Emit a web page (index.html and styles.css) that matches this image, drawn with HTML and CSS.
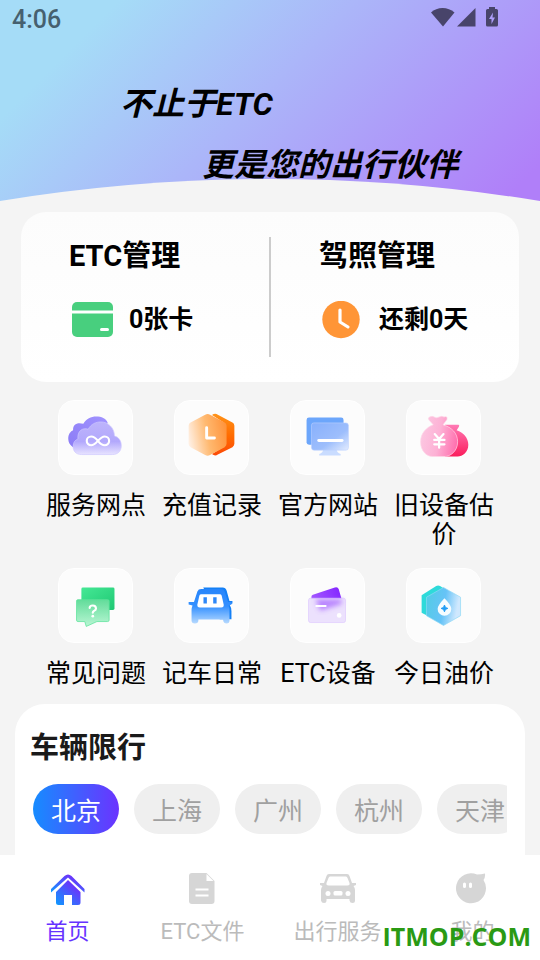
FILE: index.html
```html
<!DOCTYPE html>
<html lang="zh-CN">
<head>
  <meta charset="UTF-8">
  <meta name="viewport" content="width=device-width, initial-scale=1">
  <title>不止于ETC</title>
  <link rel="stylesheet" href="styles.css">
</head>
<body>
  <main>
    <header class="hero">
      <div class="status">
        <span class="time">4:06</span>
        <svg class="status-icons" width="68" height="22" viewBox="0 0 68 22" fill="currentColor">
          <path d="M1 6.500C7 .5 18 .5 24.500 6.500L13 20.500z"/>
          <path d="M45.500 2v18.500H27z"/>
          <path d="M59 1h6v2h1.500q1.500 0 1.500 1.500v14.500q0 1.500-1.500 1.500h-9q-1.500 0-1.500-1.500V4.500Q56 3 57.500 3H59zM63 6.500l-4 6.500h2.500v5l3.500-6.500h-2.500z" fill-rule="evenodd"/>
        </svg>
      </div>
      <h1 class="slogan">
        <span>不止于ETC</span>
        <span class="slogan-second">更是您的出行伙伴</span>
      </h1>
      <svg class="arc" viewBox="0 0 540 23" preserveAspectRatio="none">
        <path d="M0 22Q270-22 540 22V23H0z" fill="#f4f4f4"/>
      </svg>
    </header>

    <section class="manage">
      <div class="manage-item">
        <h2>ETC管理</h2>
        <div class="manage-row">
          <svg width="42" height="38" viewBox="0 0 42 38">
            <rect y="1" width="41" height="35" rx="5" fill="#48cf7e"/>
            <path d="M0 11h41" stroke="#fff" stroke-width="3"/>
            <path d="M29.500 28.500h6" stroke="#fff" stroke-width="3" stroke-linecap="round"/>
          </svg>
          <span>0张卡</span>
        </div>
      </div>
      <div class="manage-item">
        <h2>驾照管理</h2>
        <div class="manage-row">
          <svg width="42" height="38" viewBox="0 0 42 38">
            <circle cx="19" cy="18.500" r="18.700" fill="#ff9536"/>
            <path d="M18 9v12l8 5" fill="none" stroke="#fff" stroke-width="3.200" stroke-linecap="round" stroke-linejoin="round"/>
          </svg>
          <span>还剩0天</span>
        </div>
      </div>
    </section>

    <nav class="services">
      <a href="#">
        <svg class="tile" viewBox="0 0 75 75">
          <defs>
            <linearGradient id="cloudBack" x1="0" y1="1" x2="1" y2="0"><stop stop-color="#8b7cf5"/><stop offset="1" stop-color="#a193ff"/></linearGradient>
            <linearGradient id="cloudFront" x1="0" y1="0" x2="0" y2="1"><stop stop-color="#bdb4fb"/><stop offset=".6" stop-color="#b2a8fc"/><stop offset="1" stop-color="#e7e3ff"/></linearGradient>
            <filter id="soft" x="-30%" y="-30%" width="160%" height="160%"><feGaussianBlur stdDeviation="3"/></filter>
          </defs>
          <path d="M18 49C12 47 9.500 43 9.500 38.500C9.500 34 12 31 14.500 30C14 24 19 21.500 25 23.500C28 18 33 16 38 16C44 16 48 18 50 22L40 49z" fill="url(#cloudBack)"/>
          <path d="M23 55C17 55 14.500 51 14.500 47C14.500 42 17 40 19.500 39C18.500 31 24 27 30 29C33 23.500 38 21.500 43 21.500C51 21.500 57 28 57 36C61.500 37 64 41 64 46C64 52 60 55 55 55z" fill="url(#cloudFront)" stroke="#cfc8ff" stroke-width=".7"/>
          <path d="M40 41C37 37 35 36.500 33 36.500A4.500 4.500 0 0 0 33 45.500C39 45.500 41 36.500 47 36.500A4.500 4.500 0 0 1 47 45.500C45 45.500 43 45 40 41" fill="none" stroke="#fff" stroke-width="2.200"/>
        </svg>
        <span>服务网点</span>
      </a>
      <a href="#">
        <svg class="tile" viewBox="0 0 75 75">
          <defs>
            <linearGradient id="hexBack" x1="0" y1="0" x2="0" y2="1"><stop stop-color="#ff9318"/><stop offset=".55" stop-color="#ff6a00"/><stop offset="1" stop-color="#fc4a08"/></linearGradient>
            <linearGradient id="hexFront" x1="0" y1=".6" x2="1" y2=".4"><stop stop-color="#ffefe2"/><stop offset=".5" stop-color="#ffb970"/><stop offset="1" stop-color="#ff943c"/></linearGradient>
          </defs>
          <path d="M38 14.500Q41 12 44 14L59 22Q61 23 61 25.500V44Q61 46 59 47.500L44 55Q41 57 38 54.500L50 47V22z" fill="url(#hexBack)"/>
          <path d="M31 14Q33.500 12.500 36 14L51 22Q53 23 53 25.500V44Q53 46 51 47.500L36 55.500Q33.500 57 31 55.500L16 47.500Q14 46 14 44V25.500Q14 23 16 22z" fill="url(#hexFront)"/>
          <path d="M32.500 27.500v10.500h8" fill="none" stroke="#fff" stroke-width="3" stroke-linecap="round" stroke-linejoin="round"/>
        </svg>
        <span>充值记录</span>
      </a>
      <a href="#">
        <svg class="tile" viewBox="0 0 75 75">
          <defs>
            <linearGradient id="screenFront" x1="0" y1="0" x2="1" y2="1"><stop stop-color="#88b0fc"/><stop offset=".6" stop-color="#9dbefc"/><stop offset="1" stop-color="#e3ecff"/></linearGradient>
          </defs>
          <rect x="16" y="17" width="38" height="28" rx="2.500" fill="#6ca6fb"/>
          <path d="M33 50h14q0 3 4 4.500v1.500H29v-1.500q4-1.500 4-4.500z" fill="#c9dcff"/>
          <rect x="21" y="22.500" width="38" height="28" rx="2.500" fill="url(#screenFront)" stroke="#bdd3ff" stroke-width=".6"/>
          <path d="M28.500 40.500h24" stroke="#fff" stroke-width="3" stroke-linecap="round"/>
        </svg>
        <span>官方网站</span>
      </a>
      <a href="#">
        <svg class="tile" viewBox="0 0 75 75">
          <defs>
            <linearGradient id="bagBack" x1="0" y1="0" x2="0" y2="1"><stop stop-color="#ff7ab5"/><stop offset="1" stop-color="#fb1d5c"/></linearGradient>
            <linearGradient id="bagFront" x1="0" y1=".4" x2="1" y2=".6"><stop stop-color="#fcc8e2"/><stop offset=".5" stop-color="#fdb1d5"/><stop offset="1" stop-color="#ff6fae"/></linearGradient>
          </defs>
          <path d="M39 24.500h14q1.500 1 0 2.500l-2 3C58 32 63 38 63 45C63 53 57 57 52 57H39z" fill="url(#bagBack)"/>
          <path d="M23 16.500Q26 15 28 16.500T33 16.500T38 16.500Q42 15 41 19L37 24.500C46 27 52 33 52 42C52 52 44 57 39 57H26C20 57 14 51 14 42C14 33 20 27 27 24.500L23 20Q21 18 23 16.500z" fill="url(#bagFront)" stroke="#ffd5e8" stroke-width=".7"/>
          <path d="M28.500 34l4.500 5l4.500-5M33 39v9M28 40h10.500M28 44.500h10.500" fill="none" stroke="#fff" stroke-width="2.300" stroke-linecap="round"/>
        </svg>
        <span>旧设备估价</span>
      </a>
      <a href="#">
        <svg class="tile" viewBox="0 0 75 75">
          <defs>
            <linearGradient id="chatBack" x1="0" y1="0" x2="1" y2="1"><stop stop-color="#45e895"/><stop offset="1" stop-color="#1fc873"/></linearGradient>
            <linearGradient id="chatFront" x1="0" y1="0" x2="0" y2="1"><stop stop-color="#62dc9a"/><stop offset="1" stop-color="#b9f6d4"/></linearGradient>
          </defs>
          <rect x="23" y="19" width="34" height="23" rx="1.500" fill="url(#chatBack)"/>
          <path d="M19.500 31.500H50q1.500 0 1.500 1.500V52.500q0 1.500-1.500 1.500H39L28 59L26.500 54H19.500q-1.500 0-1.500-1.500V33q0-1.500 1.500-1.500z" fill="url(#chatFront)" stroke="#5fe39c" stroke-width=".8"/>
          <path d="M31.500 40Q31.500 37.500 34.700 37.500T38 40.500Q38 42 36 43Q34.700 44 34.700 45" fill="none" stroke="#fff" stroke-width="2.200" stroke-linecap="round"/>
          <circle cx="34.700" cy="48.500" r="1.400" fill="#fff"/>
        </svg>
        <span>常见问题</span>
      </a>
      <a href="#">
        <svg class="tile" viewBox="0 0 75 75">
          <defs>
            <linearGradient id="carFront" x1="0" y1="0" x2="0" y2="1"><stop stop-color="#2785fb"/><stop offset=".5" stop-color="#3490ff"/><stop offset="1" stop-color="#b7daff"/></linearGradient>
          </defs>
          <path d="M29 19h20q3 0 4 3l3 11h3v2.500l-3 1q2 3 2 7v8h-12z" fill="#1480f6"/>
          <path d="M27 20.500h20q3 0 4 2.500l3.500 11H58v2.500l-3 1q1 2 1 4.500v11q0 3-3 3t-3.500-3V52H24v1q0 3-3.500 3T17 53V42q0-2 1-4.500L14 36.500V34h5.500L23 23q1-2.500 4-2.500z" fill="url(#carFront)"/>
          <path d="M27 26h19q1.500 0 2 1.500l2 9q.5 3-2.500 3h-22q-3 0-2.500-3l2-9q.5-1.500 2-1.500z" fill="#fff"/>
          <path d="M31 29v6.500M41 29v6.500" stroke="#2d87f8" stroke-width="3.500"/>
        </svg>
        <span>记车日常</span>
      </a>
      <a href="#">
        <svg class="tile" viewBox="0 0 75 75">
          <defs>
            <linearGradient id="cardBack" x1="0" y1=".6" x2="1" y2=".3"><stop stop-color="#a45bff"/><stop offset="1" stop-color="#8527ff"/></linearGradient>
          </defs>
          <path d="M21 31v-2.500Q21 27 22.500 26.500L45 19Q48 18 49 20.500L52 31v12z" fill="url(#cardBack)"/>
          <rect x="18" y="30" width="38" height="25" rx="2" fill="#e9dcfd"/>
          <path d="M25 31h27v5L30 43z" fill="#9a4eff" opacity=".75" filter="url(#soft)"/>
          <rect x="18" y="30" width="38" height="25" rx="2" fill="#fff" fill-opacity=".15" stroke="#dbc4ff" stroke-width=".6"/>
          <path d="M26 38h9.500" stroke="#fff" stroke-width="2.200" stroke-linecap="round"/>
          <circle cx="49.500" cy="47.700" r="2.400" fill="#fff"/>
        </svg>
        <span>ETC设备</span>
      </a>
      <a href="#">
        <svg class="tile" viewBox="0 0 75 75">
          <defs>
            <linearGradient id="oilFront" x1="0" y1=".4" x2="1" y2=".6"><stop stop-color="#54cbe7"/><stop offset=".5" stop-color="#66c3f7"/><stop offset=".9" stop-color="#cfe8fe"/></linearGradient>
          </defs>
          <path d="M30 17.500Q32 16.500 34 17.500L38 20L20 47.500L15 45V27z" fill="#2edada"/>
          <path d="M37.500 19L55 29V48L37.500 58L20 48V29z" fill="url(#oilFront)" stroke="#8fd9f6" stroke-width=".7"/>
          <path d="M38.500 30Q45.500 37 45.500 41A7 7 0 0 1 31.500 41Q31.500 37 38.500 30z" fill="#f5fcff"/>
          <path d="M38.500 37l1 2.500l2.500 1l-2.500 1l-1 2.500l-1-2.500l-2.500-1l2.500-1z" fill="#219df5" stroke="#219df5"/>
        </svg>
        <span>今日油价</span>
      </a>
    </nav>

    <section class="limit">
      <h2>车辆限行</h2>
      <div class="cities">
        <button class="city active" type="button">北京</button>
        <button class="city" type="button">上海</button>
        <button class="city" type="button">广州</button>
        <button class="city" type="button">杭州</button>
        <button class="city" type="button">天津</button>
      </div>
    </section>
  </main>

  <nav class="tabbar">
    <a class="active" href="#">
      <svg width="36" height="36" viewBox="0 0 36 36">
        <defs>
          <linearGradient id="home" x1="0" y1="1" x2=".7" y2=".2"><stop stop-color="#0b9bff"/><stop offset="1" stop-color="#6a35fb"/></linearGradient>
        </defs>
        <path d="M1 20.500V17L14.500 4Q18 1 21.500 4L34.500 17V20.500L18 5.500z" fill="url(#home)"/>
        <path d="M18 8L30.500 20V30.500Q30.500 33 28 33H22V23H14V33H8.500Q6 33 6 30.500V20z" fill="url(#home)"/>
      </svg>
      <span>首页</span>
    </a>
    <a href="#">
      <svg width="36" height="36" viewBox="0 0 36 36">
        <path d="M7 1H21.500L29.500 9V29Q29.500 32 26.500 32H7Q4 32 4 29V4Q4 1 7 1z" fill="#d6d6d6"/>
        <path d="M21.500 2V9H28.500z" fill="#fff"/>
        <path d="M10.500 17.500h13M10.500 23.500h13" stroke="#fff" stroke-width="2"/>
      </svg>
      <span>ETC文件</span>
    </a>
    <a href="#">
      <svg width="36" height="36" viewBox="0 0 36 36">
        <path d="M9 2H27Q29 2 29.500 4L32 11H36V13L33.500 14Q35 16 35 18V28.500Q35 31 32.500 31T29.500 28.500V27H6.500V28.500Q6.500 31 4 31T1 28.500V18Q1 16 2.500 14L0 13V11H4L6.500 4Q7 2 9 2z" fill="#d6d6d6"/>
        <path d="M10 4.500H26Q27 4.500 27.500 6L29.500 11Q30 13.500 27.500 13.500H8.500Q6 13.500 6.500 11L8.500 6Q9 4.500 10 4.500z" fill="#fff"/>
        <circle cx="8" cy="21.500" r="2.500" fill="#fff"/>
        <circle cx="28" cy="21.500" r="2.500" fill="#fff"/>
        <rect x="13.500" y="19" width="9" height="4.500" rx="1.500" fill="#fff"/>
      </svg>
      <span>出行服务</span>
    </a>
    <a href="#">
      <svg width="36" height="36" viewBox="0 0 36 36">
        <path d="M22 2.500Q26 2.500 30 1.500Q30.500 5 28.500 8Q31 12 31 16A15 15 0 1 1 22 2.500z" fill="#d6d6d6"/>
        <path d="M9.500 12v2.500M15.500 12v2.500" stroke="#fff" stroke-width="3" stroke-linecap="round"/>
      </svg>
      <span>我的</span>
    </a>
    <span class="watermark">ITMOP.COM</span>
  </nav>
</body>
</html>
```
FILE: styles.css
```css
* {
  box-sizing: border-box;
}
body {
  margin: 0;
  height: 100vh;
  display: flex;
  flex-direction: column;
  background: #f4f4f4;
  color: #000;
  font-family: Roboto, "Noto Sans CJK SC", sans-serif;
  font-size: 25px;
}
h1, h2 {
  margin: 0;
}
a {
  color: inherit;
  text-decoration: none;
}
svg {
  display: block;
}
main {
  flex: 1;
  min-height: 0;
  overflow: hidden;
  display: flex;
  flex-direction: column;
}

/* top banner */
.hero {
  position: relative;
  flex: none;
  height: 202px;
  background: linear-gradient(135deg, #a5dcf7 16%, #abb6f9 48%, #b07ff9 95%);
}
.status {
  display: flex;
  justify-content: space-between;
  padding: 6px 42px 0 12px;
  line-height: 28px;
}
.time {
  color: #46606f;
  font-weight: 500;
}
.status-icons {
  color: #48446a;
}
.slogan {
  display: flex;
  flex-direction: column;
  align-items: flex-start;
  position: relative;
  z-index: 1;
  padding: 40px 0 0 120px;
  font-size: 32px;
  font-style: italic;
  font-weight: bold;
  line-height: 61px;
}
.slogan-second {
  padding-left: 82px;
}
.arc {
  position: absolute;
  left: 0;
  bottom: 0;
  width: 100%;
  height: 23px;
}

/* ETC / licence card */
.manage {
  flex: none;
  display: flex;
  margin: 10px 21px 0;
  padding: 25px 0;
  border-radius: 25px;
  background: linear-gradient(#fcfcfc, #fff);
}
.manage-item {
  flex: 1;
  height: 120px;
  padding-left: 48px;
}
.manage-item + .manage-item {
  border-left: 2px solid #ccc;
}
.manage h2,
.limit h2 {
  font-size: 29px;
  line-height: 38px;
}
.manage-row {
  display: flex;
  align-items: center;
  gap: 15px;
  margin: 26px 0 0 3px;
  font-weight: bold;
  line-height: 38px;
}

/* service grid */
.services {
  flex: none;
  display: grid;
  grid-template-columns: repeat(4, 1fr);
  gap: 19px 0;
  padding: 18px 39px 16px 37px;
}
.services a {
  display: flex;
  flex-direction: column;
  align-items: center;
  gap: 16px;
  line-height: 29px;
  text-align: center;
}
.services span {
  width: 102px;
  padding-left: 2px;
}
.tile {
  width: 75px;
  height: 75px;
  border: 1px solid #fff;
  border-radius: 16px;
  background: #fcfcfc;
}

/* driving restrictions */
.limit {
  flex: 1;
  margin: 0 15px;
  padding: 25px 18px 0 15px;
  border-radius: 30px 30px 0 0;
  background: #fff;
}
.limit h2 {
  color: #1a1a1a;
}
.cities {
  display: flex;
  gap: 15px;
  margin: 17px 0 0 3px;
  overflow: hidden;
}
.city {
  flex: none;
  width: 86px;
  height: 50px;
  padding: 0;
  border: 0;
  border-radius: 25px;
  background: #efefef;
  color: #a0a0a0;
  font: inherit;
}
.city.active {
  background: linear-gradient(90deg, #168cff, #6b33ff);
  color: #fff;
}

/* bottom tabs */
.tabbar {
  position: relative;
  flex: none;
  display: flex;
  height: 105px;
  padding-top: 17px;
  background: #fff;
  color: #bbb;
  font-size: 22px;
  line-height: 26px;
}
.tabbar a {
  flex: 1;
  display: flex;
  flex-direction: column;
  align-items: center;
  gap: 11px;
}
.tabbar .active {
  color: #6633ff;
}
.watermark {
  position: absolute;
  right: 9px;
  bottom: 11px;
  color: #2a9a14;
  font-family: "Open Sans", sans-serif;
  font-size: 25px;
  font-weight: bold;
}
```
